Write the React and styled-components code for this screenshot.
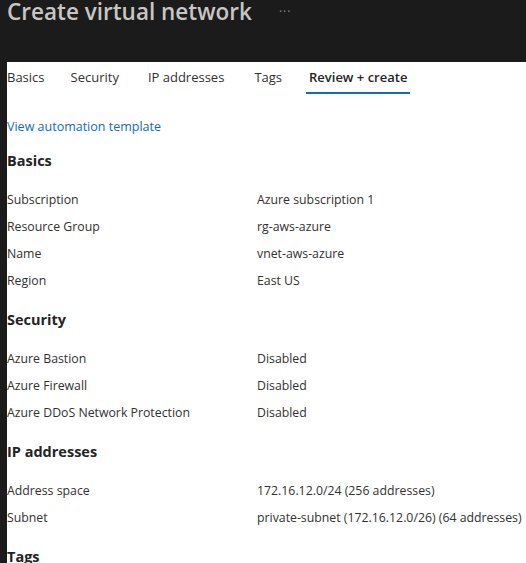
import React from "react";
import styled, { createGlobalStyle } from "styled-components";

const GlobalStyle = createGlobalStyle`
  html, body {
    margin: 0;
    padding: 0;
    background: #1b1b1b;
  }
  body {
    font-family: "Open Sans", "Noto Sans", sans-serif;
  }
`;

const Page = styled.div`
  width: 526px;
  height: 563px;
  overflow: hidden;
  background: #1b1b1b;
  display: flex;
  flex-direction: column;
`;

const Header = styled.header`
  height: 62px;
  flex-shrink: 0;
  display: flex;
  align-items: flex-start;
  padding-left: 7px;
  box-sizing: border-box;
`;

const Title = styled.h1`
  margin: -3px 0 0;
  font-size: 22.5px;
  font-weight: 600;
  color: #c8c6c4;
  line-height: 30px;
  white-space: nowrap;
`;

const More = styled.span`
  margin-left: 27px;
  color: #8a8886;
  font-size: 12px;
  line-height: 24px;
  letter-spacing: 1px;
`;

const Panel = styled.main`
  flex: 1;
  margin-left: 7px;
  background: #ffffff;
  color: #323130;
`;

const TabBar = styled.nav`
  display: flex;
  height: 32px;
  align-items: stretch;
`;

const Tab = styled.div`
  display: flex;
  align-items: center;
  padding: 0 ${(p) => (p.$active ? "3px" : "0")} 1px;
  margin-left: ${(p) => (p.$active ? "-3px" : "0")};
  margin-right: ${(p) => p.$gap}px;
  font-size: 13px;
  font-weight: ${(p) => (p.$active ? 600 : 400)};
  color: ${(p) => (p.$active ? "#242424" : "#323130")};
  border-bottom: 2px solid ${(p) => (p.$active ? "#0f6cbd" : "transparent")};
`;

const Content = styled.section`
  padding-top: 23px;
`;

const Link = styled.a`
  display: block;
  color: #0f6cbd;
  font-size: 12.5px;
  line-height: 20px;
  text-decoration: none;
  margin-bottom: 14px;
`;

const SectionTitle = styled.h2`
  margin: 0 0 15px;
  font-size: 14.5px;
  font-weight: 700;
  color: #242424;
  line-height: 20px;
`;

const Section = styled.div`
  margin-bottom: 16px;
`;

const Row = styled.div`
  display: grid;
  grid-template-columns: 250px 1fr;
  height: 27px;
  align-items: center;
  font-size: 12.3px;
  white-space: nowrap;
`;

const Label = styled.span`
  color: #323130;
`;

const Value = styled.span`
  color: #323130;
`;

const tabs = [
  { name: "Basics", gap: 26 },
  { name: "Security", gap: 29 },
  { name: "IP addresses", gap: 30 },
  { name: "Tags", gap: 27 },
  { name: "Review + create", active: true },
];

const sections = [
  {
    title: "Basics",
    rows: [
      ["Subscription", "Azure subscription 1"],
      ["Resource Group", "rg-aws-azure"],
      ["Name", "vnet-aws-azure"],
      ["Region", "East US"],
    ],
  },
  {
    title: "Security",
    rows: [
      ["Azure Bastion", "Disabled"],
      ["Azure Firewall", "Disabled"],
      ["Azure DDoS Network Protection", "Disabled"],
    ],
  },
  {
    title: "IP addresses",
    rows: [
      ["Address space", "172.16.12.0/24 (256 addresses)"],
      ["Subnet", "private-subnet (172.16.12.0/26) (64 addresses)"],
    ],
  },
  { title: "Tags", rows: [] },
];

export default function App() {
  return (
    <Page>
      <GlobalStyle />
      <Header>
        <Title>Create virtual network</Title>
        <More>···</More>
      </Header>
      <Panel>
        <TabBar>
          {tabs.map((t) => (
            <Tab key={t.name} $active={t.active} $gap={t.gap || 0}>
              {t.name}
            </Tab>
          ))}
        </TabBar>
        <Content>
          <Link href="#">View automation template</Link>
          {sections.map((s) => (
            <Section key={s.title}>
              <SectionTitle>{s.title}</SectionTitle>
              {s.rows.map(([label, value]) => (
                <Row key={label}>
                  <Label>{label}</Label>
                  <Value>{value}</Value>
                </Row>
              ))}
            </Section>
          ))}
        </Content>
      </Panel>
    </Page>
  );
}
